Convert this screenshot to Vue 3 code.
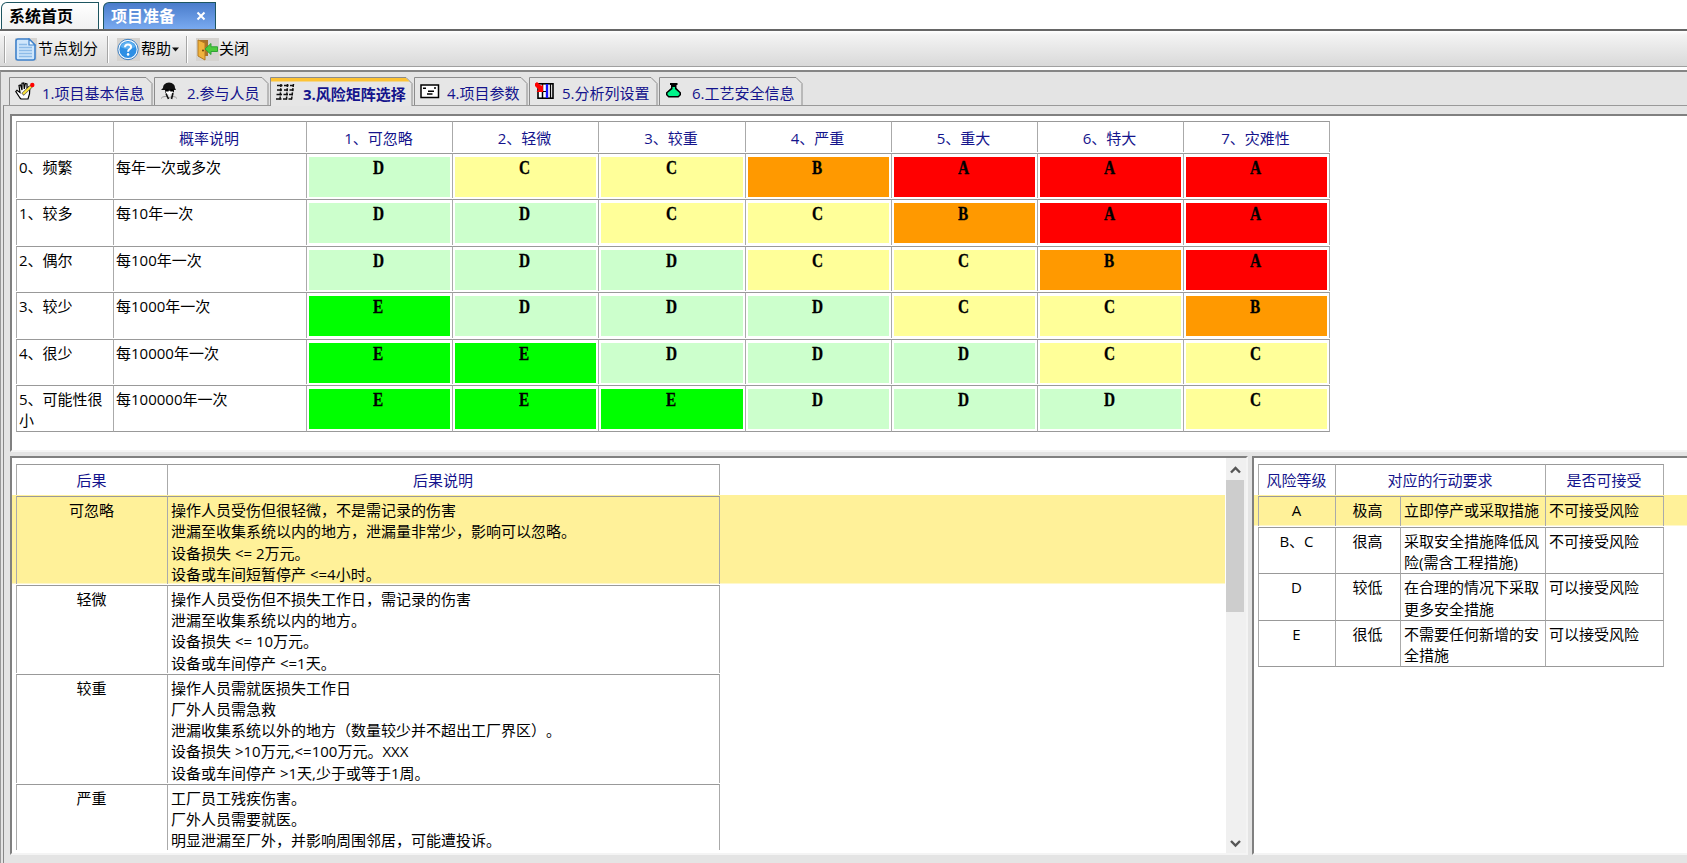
<script setup>
import { ref } from "vue";

const activeTab = ref(3);

const tabs = [
  { id: 1, label: "1.项目基本信息", icon: "hand", width: 144 },
  { id: 2, label: "2.参与人员", icon: "person", width: 115 },
  { id: 3, label: "3.风险矩阵选择", icon: "matrix", width: 143 },
  { id: 4, label: "4.项目参数", icon: "card", width: 114 },
  { id: 5, label: "5.分析列设置", icon: "columns", width: 129 },
  { id: 6, label: "6.工艺安全信息", icon: "flask", width: 144 },
];

const severities = [
  "1、可忽略",
  "2、轻微",
  "3、较重",
  "4、严重",
  "5、重大",
  "6、特大",
  "7、灾难性",
];

const matrix = [
  { name: "0、频繁", desc: "每年一次或多次", levels: "DCCBAAA" },
  { name: "1、较多", desc: "每10年一次", levels: "DDCCBAA" },
  { name: "2、偶尔", desc: "每100年一次", levels: "DDDCCBA" },
  { name: "3、较少", desc: "每1000年一次", levels: "EDDDCCB" },
  { name: "4、很少", desc: "每10000年一次", levels: "EEDDDCC" },
  { name: "5、可能性很小", desc: "每100000年一次", levels: "EEEDDDC" },
];

const selectedResult = ref(0);
const results = [
  {
    name: "可忽略",
    lines: [
      "操作人员受伤但很轻微，不是需记录的伤害",
      "泄漏至收集系统以内的地方，泄漏量非常少，影响可以忽略。",
      "设备损失 <= 2万元。",
      "设备或车间短暂停产 <=4小时。",
    ],
  },
  {
    name: "轻微",
    lines: [
      "操作人员受伤但不损失工作日，需记录的伤害",
      "泄漏至收集系统以内的地方。",
      "设备损失 <= 10万元。",
      "设备或车间停产 <=1天。",
    ],
  },
  {
    name: "较重",
    lines: [
      "操作人员需就医损失工作日",
      "厂外人员需急救",
      "泄漏收集系统以外的地方（数量较少并不超出工厂界区）。",
      "设备损失 >10万元,<=100万元。XXX",
      "设备或车间停产 >1天,少于或等于1周。",
    ],
  },
  {
    name: "严重",
    lines: [
      "工厂员工残疾伤害。",
      "厂外人员需要就医。",
      "明显泄漏至厂外，并影响周围邻居，可能遭投诉。",
    ],
  },
];

const rowHeight = (lines) => lines.length * 21.3 + 3.6 + "px";

const selectedRisk = ref(0);
const risks = [
  { level: "A", grade: "极高", action: "立即停产或采取措施", accept: "不可接受风险" },
  { level: "B、C", grade: "很高", action: "采取安全措施降低风险(需含工程措施)", accept: "不可接受风险" },
  { level: "D", grade: "较低", action: "在合理的情况下采取更多安全措施", accept: "可以接受风险" },
  { level: "E", grade: "很低", action: "不需要任何新增的安全措施", accept: "可以接受风险" },
];
</script>

<template>
  <div class="window">
    <div class="system-tabs">
      <div class="system-tab">系统首页</div>
      <div class="system-tab current">
        项目准备
        <svg class="close" width="10" height="10" viewBox="0 0 10 10">
          <path d="M1.5 1.5L8.5 8.5M8.5 1.5L1.5 8.5" stroke="#fff" stroke-width="2" />
        </svg>
      </div>
    </div>

    <div class="toolbar">
      <div class="tool">
        <svg width="22" height="23" viewBox="0 0 22 23">
          <rect width="22" height="23" fill="#d5d3d0" />
          <path
            d="M3 1H14L20 7V20Q20 22 18 22H3Q1 22 1 20V3Q1 1 3 1Z"
            fill="#cfe6fb"
            stroke="#3f83cd"
            stroke-width="1.6"
          />
          <path d="M14 1V7H20Z" fill="#f4faff" stroke="#3f83cd" stroke-width="1.2" />
          <path d="M4 6.5H12M4 9.5H17M4 12.5H17M4 15.5H17M4 18.5H17" stroke="#8dbbe8" stroke-width="1.3" />
        </svg>
        节点划分
      </div>
      <div class="tool help">
        <svg width="23" height="23" viewBox="0 0 23 23">
          <rect width="23" height="23" fill="#d5d3d0" />
          <circle cx="11" cy="11.5" r="10.2" fill="#f3f8fd" stroke="#3c7fc2" stroke-width="1" />
          <circle cx="11" cy="11.5" r="8.6" fill="#2d8fe4" />
          <path d="M3.5 9A8 8 0 0 1 18.5 9Q11 13 3.5 9Z" fill="#5fb0f0" />
          <path
            d="M8 9.2Q8 6.4 11 6.4Q14.1 6.4 14.1 9Q14.1 10.5 12.4 11.4Q11.1 12.1 11.1 13.8"
            fill="none"
            stroke="#fff"
            stroke-width="2"
          />
          <circle cx="11.1" cy="16.4" r="1.3" fill="#fff" />
        </svg>
        <span>帮助</span>
        <svg width="7" height="5" viewBox="0 0 7 5"><path d="M0 0.5H7L3.5 4.5Z" fill="#111" /></svg>
      </div>
      <div class="tool exit">
        <svg width="23" height="23" viewBox="0 0 23 23">
          <rect width="23" height="23" fill="#d5d3d0" />
          <path d="M2 2H12V18H2Z" fill="#a8732a" />
          <path d="M2 2L9 5V22L2 18Z" fill="#f0b33c" stroke="#b57a20" />
          <circle cx="7" cy="12.5" r="1" fill="#6d430b" />
          <path
            d="M9 11L15 5.5V8.8H21.5V13.5H15V16.5Z"
            fill="#4ccb3c"
            stroke="#2fa335"
            stroke-width="1"
          />
        </svg>
        关闭
      </div>
    </div>

    <div class="workspace">
      <div class="page-tabs">
        <div
          v-for="tab in tabs"
          :key="tab.id"
          :class="['page-tab', tab.id === activeTab && 'active']"
          :style="{ width: tab.width + 'px' }"
          @click="activeTab = tab.id"
        >
          <svg class="tab-shape" :width="tab.width" height="29">
            <path
              :d="`M0.5 29V0.5H${tab.width - 7}L${tab.width - 1} 6.5V29`"
              fill="#e6e6e6"
              stroke="#8c8c8c"
            />
            <path
              v-if="tab.id === activeTab"
              :d="`M1 1H${tab.width - 7}L${tab.width - 3.5} 4.5H1Z`"
              fill="#fdc335"
            />
          </svg>
          <svg class="tab-icon" width="20" height="18" viewBox="0 0 20 18">
            <g v-if="tab.icon === 'hand'">
              <path
                d="M5 16L0.8 9.5L2 8.3L5 10.5L4 3.5L5.6 3L7 8V1.3L8.7 1L9.3 7L10.3 1.5L12 2V8L13.5 5L14.8 6L14.5 12L13 17H6Z"
                fill="#fff"
                stroke="#000"
                stroke-width="1.2"
              />
              <path d="M7.5 12.5L16.5 4" stroke="#555" stroke-width="3.2" />
              <path d="M8 12L16 4.5" stroke="#ffe63b" stroke-width="2.2" />
              <circle cx="17.3" cy="3" r="2.2" fill="#f00" />
            </g>
            <g v-else-if="tab.icon === 'person'">
              <path d="M3 6Q3 1 9 0.5Q15 1 15 6L16 8H14V10L9.5 13L5 10.5V8H1L3 6Z" fill="#111" />
              <path d="M5.5 8.8H13V10.8L9.5 13.5L6 11.3Z" fill="#fff" />
              <path d="M5.5 8.3H8.6M10.3 8.3H13.4" stroke="#000" stroke-width="2.2" />
              <path d="M1 16.5Q2 14.5 6 14.3L9 16L12 14.3Q16 14.5 17 16.5" fill="none" stroke="#999" stroke-width="1" />
              <path d="M6 11.5L8.5 17M13 11L11.5 17" stroke="#111" stroke-width="1.6" />
            </g>
            <g v-else-if="tab.icon === 'matrix'" fill="none" stroke="#111">
              <path d="M1 2.5H6.5M8 2.5H12.5M14 2.5H18M1 7H6M8 7H12M13.5 7H17.5M0.5 11.5H6M7.5 11.5H12M13 11.5H17M0 16H5.5M7 16H11M12.5 16H16" stroke-width="1.7" />
              <path d="M5 1L4 17M11.5 1L10.5 17M17.5 1L15.5 17" stroke-width="1.5" stroke-dasharray="3 1.2" />
            </g>
            <g v-else-if="tab.icon === 'card'">
              <rect x="1" y="3" width="17.5" height="12.5" fill="#fff" stroke="#000" stroke-width="1.5" />
              <path d="M3 6.2H6M8 9.3H14M7 12H12.5M14 6H16" stroke="#000" stroke-width="1.6" />
            </g>
            <g v-else-if="tab.icon === 'columns'">
              <rect x="3" y="1.8" width="15" height="14.4" fill="#fff" stroke="#000" stroke-width="1.6" />
              <path d="M7.5 2V16" stroke="#000" stroke-width="1.5" />
              <path d="M12 2V16" stroke="#1616ff" stroke-width="2.4" />
              <path d="M15.5 2V16" stroke="#000" stroke-width="1.3" />
              <path d="M3 9.5H11" stroke="#000" stroke-width="1" />
              <path d="M0 1.5L2 0L6.5 4L8 2.5V10H1.5L3.5 7.5L0 4Z" fill="#f00" />
            </g>
            <g v-else>
              <path d="M5 1H12.5V3H11.5V6L16 10.5V13L13.5 15.5H3.5L1 13V10.5L6 6V3H5Z" fill="#000" />
              <path d="M7.5 5H10V7L14.5 11V12.5L13 14H4L2.5 12.5V11L7.5 7Z" fill="#00f58a" />
            </g>
          </svg>
          <span class="tab-label">{{ tab.label }}</span>
        </div>
      </div>

      <div class="page">
        <section class="panel matrix-panel">
          <div class="row head matrix-row">
            <div class="cell"></div>
            <div class="cell">概率说明</div>
            <div v-for="item in severities" :key="item" class="cell">{{ item }}</div>
          </div>
          <div v-for="item in matrix" :key="item.name" class="row matrix-row">
            <div class="cell">{{ item.name }}</div>
            <div class="cell">{{ item.desc }}</div>
            <div v-for="(level, index) in item.levels" :key="index" class="cell level-cell">
              <div :class="['level', 'level-' + level]"><b>{{ level }}</b></div>
            </div>
          </div>
        </section>

        <div class="bottom">
          <section class="panel result-panel">
            <div class="result-list">
              <div class="row head result-row">
                <div class="cell">后果</div>
                <div class="cell">后果说明</div>
              </div>
              <div
                v-for="(item, index) in results"
                :key="item.name"
                :class="['row', 'result-row', selectedResult === index && 'selected']"
                :style="{ height: rowHeight(item.lines) }"
                @click="selectedResult = index"
              >
                <div class="cell center">{{ item.name }}</div>
                <div class="cell">
                  <div v-for="line in item.lines" :key="line">{{ line }}</div>
                </div>
              </div>
            </div>
            <div class="scrollbar">
              <svg width="19" height="22" viewBox="0 0 19 22">
                <path d="M5 14.5L9.5 10L14 14.5" fill="none" stroke="#555" stroke-width="2.4" />
              </svg>
              <div class="thumb"></div>
              <svg width="19" height="22" viewBox="0 0 19 22">
                <path d="M5 10L9.5 14.5L14 10" fill="none" stroke="#555" stroke-width="2.4" />
              </svg>
            </div>
          </section>

          <section class="panel risk-panel">
            <div class="row head risk-row">
              <div class="cell">风险等级</div>
              <div class="cell wide">对应的行动要求</div>
              <div class="cell">是否可接受</div>
            </div>
            <div
              v-for="(item, index) in risks"
              :key="item.level"
              :class="['row', 'risk-row', selectedRisk === index && 'selected']"
              @click="selectedRisk = index"
            >
              <div class="cell center">{{ item.level }}</div>
              <div class="cell center">{{ item.grade }}</div>
              <div class="cell">{{ item.action }}</div>
              <div class="cell">{{ item.accept }}</div>
            </div>
          </section>
        </div>
      </div>
    </div>
  </div>
</template>

<style>
body {
  overflow: hidden;
}
</style>

<style scoped>
.window {
  display: flex;
  flex-direction: column;
  height: 863px;
  overflow: hidden;
  background: #fff;
  color: #000;
  font: 15px/21.3px "Open Sans", "Noto Sans CJK SC", sans-serif;
  text-spacing-trim: space-all;
}

.window * {
  box-sizing: border-box;
}

/* system tabs */
.system-tabs {
  display: flex;
  gap: 4px;
  height: 29px;
  padding: 2px 0 0 1px;
}

.system-tab {
  display: flex;
  align-items: center;
  width: 98px;
  height: 27px;
  padding: 2px 0 0 7px;
  border: 1px solid #1d5560;
  border-bottom: none;
  border-top-left-radius: 6px;
  background: linear-gradient(#fff, #f1f1f1);
  font-size: 16px;
  font-weight: 700;
  white-space: nowrap;
}

.system-tab.current {
  width: 113px;
  background: linear-gradient(#4a7ccb, #79aaf0);
  color: #fff;
}

.system-tab .close {
  margin: -2px 0 0 21px;
}

/* toolbar */
.toolbar {
  display: flex;
  align-items: center;
  height: 38px;
  padding: 1px 0 0 4px;
  border-top: 2px solid #666;
  border-bottom: 1px solid #a0a0a0;
  background: linear-gradient(#fff 0, #f3f3f3 4px, #d9d9d9 100%);
  flex-shrink: 0;
}

.tool {
  display: flex;
  align-items: center;
  gap: 1px;
  width: 103px;
  height: 27px;
  padding-left: 10px;
  border-left: 1px solid #a5a5a5;
  box-shadow: inset 1px 0 #fff;
  white-space: nowrap;
}

.tool.help {
  width: 79px;
  padding-left: 9px;
}

.tool.exit {
  gap: 0;
  padding-left: 9px;
}

/* workspace */
.workspace {
  display: flex;
  flex-direction: column;
  flex: 1;
  min-height: 0;
  margin-top: 3px;
  padding-top: 5px;
  border-top: 2px solid #858585;
  border-left: 1px solid #999;
  background: #e4e4e4;
}

.page-tabs {
  display: flex;
  padding-left: 8px;
  height: 28px;
  flex-shrink: 0;
  position: relative;
}

.page-tab {
  position: relative;
  display: flex;
  align-items: center;
  height: 28px;
  padding: 6px 0 0 5px;
  margin-right: 1px;
  color: #14148c;
  white-space: nowrap;
  flex-shrink: 0;
}

.page-tab.active {
  height: 29px;
  font-weight: 700;
}

.tab-shape {
  position: absolute;
  left: 0;
  top: 0;
}

.page-tab:not(.active) .tab-shape {
  height: 28px;
}

.tab-icon {
  position: relative;
  margin: -6px 7px 0 1px;
}

.tab-label {
  position: relative;
}

.page {
  display: flex;
  flex-direction: column;
  flex: 1;
  min-height: 0;
  margin-left: 2px;
  padding: 8px 0 8px 6px;
  border-top: 1px solid #999;
  border-left: 1px solid #888;
}

.panel {
  border: 2px solid #808080;
  border-right: none;
  border-bottom: 2px solid #f4f4f4;
  background: #fff;
  overflow: hidden;
}

.matrix-panel {
  height: 338px;
  padding: 5px 0 0;
  flex-shrink: 0;
}

.bottom {
  display: flex;
  flex: 1;
  min-height: 0;
  gap: 4px;
  margin-top: 4px;
}

/* grids */
.row {
  display: grid;
  padding: 1px 0 0 4px;
}

.row.selected {
  background: linear-gradient(#fff199 0, #fff199 calc(100% - 1px), #fff 100%);
}

.cell {
  padding: 3px 2px 0 3px;
  border-top: 1px solid #999;
  border-left: 1px solid #aaa;
  min-width: 0;
}

.cell:last-child {
  border-right: 1px solid #aaa;
}

.cell.center {
  padding: 3px 3px 0 2px;
  text-align: center;
}

.head .cell {
  padding: 5px 3px 0 2px;
  color: #14148c;
  text-align: center;
}

.matrix-row {
  grid-template-columns: 97px 193px 146px 146px 147px 146px 146px 146px 147px;
  grid-auto-rows: 45.4px;
  padding-top: 0;
  margin-bottom: 1px;
}

.matrix-row.head {
  grid-auto-rows: 31px;
}

.matrix-row:last-child .cell {
  height: 47.4px;
  border-bottom: 1px solid #999;
}

.matrix-row .cell {
  padding: 3px 2px 0;
}

.matrix-row.head .cell {
  padding: 6px 4px 0 2px;
}

.matrix-row .level-cell {
  padding: 3px 2px 2px;
}

.level {
  height: 40px;
  padding-right: 2px;
  font: 18px/22px "Liberation Serif", serif;
  text-align: center;
}

.level b {
  display: inline-block;
  transform: scaleX(0.85);
  -webkit-text-stroke: 0.3px #000;
}

.level-A {
  background: #f00;
}

.level-B {
  background: #f90;
}

.level-C {
  background: #ff9;
}

.level-D {
  background: #cfc;
}

.level-E {
  background: #0f0;
}

.result-panel {
  display: flex;
  width: 1238px;
  border-right: 2px solid #f4f4f4;
}

.result-list {
  flex: 1;
  min-width: 0;
  padding-top: 5px;
  overflow: hidden;
}

.result-row {
  grid-template-columns: 151px 553px;
  grid-template-rows: 100%;
}

.result-row.head,
.risk-row.head {
  height: 32px;
}

.scrollbar {
  display: flex;
  flex-direction: column;
  width: 20px;
  margin-left: 1px;
  background: #f0f0f0;
}

.thumb {
  width: 18px;
  height: 132px;
  margin-bottom: auto;
  background: #cdcdcd;
}

.risk-panel {
  flex: 1;
  padding-top: 5px;
}

.risk-row {
  grid-template-columns: 77px 65px 145px 119px;
  height: 46.4px;
  padding-left: 4px;
}

.risk-row.selected {
  height: 31px;
}

.risk-row .wide {
  grid-column: span 2;
}

.risk-row:last-child .cell {
  border-bottom: 1px solid #999;
}
</style>
